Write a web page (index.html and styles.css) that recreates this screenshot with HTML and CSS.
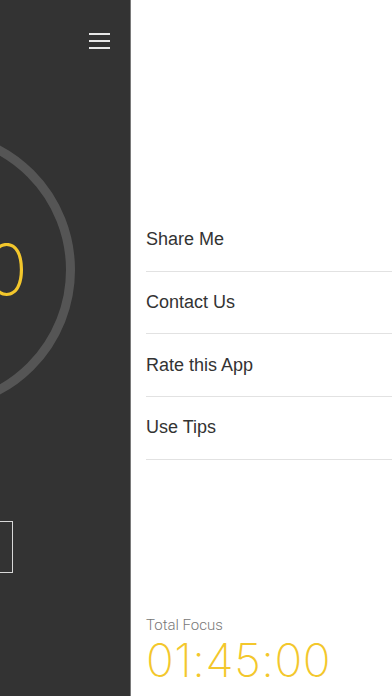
FILE: index.html
```html
<!DOCTYPE html>
<html lang="en">
<head>
    <meta charset="UTF-8">
    <meta name="viewport" content="width=device-width, initial-scale=1.0">
    <title>Focus Timer</title>
    <link rel="stylesheet" href="styles.css">
</head>
<body>
    <div class="app">
        <div class="timer-panel">
            <div class="timer-screen">
                <div class="topbar">
                    <button class="menu-btn" aria-label="Menu">
                        <span></span>
                        <span></span>
                        <span></span>
                    </button>
                </div>
                <div class="ring">
                    <div class="time">25:00</div>
                </div>
                <button class="start-btn" aria-label="Start"></button>
            </div>
        </div>

        <div class="side-menu">
            <ul class="menu-list">
                <li><a href="#">Share Me</a></li>
                <li><a href="#">Contact Us</a></li>
                <li><a href="#">Rate this App</a></li>
                <li><a href="#">Use Tips</a></li>
            </ul>

            <div class="total">
                <div class="total-label">Total Focus</div>
                <div class="total-time">01:45:00</div>
            </div>
        </div>
    </div>
</body>
</html>
```

FILE: styles.css
```css
*{
    padding: 0;
    margin: 0;
    box-sizing: border-box;
}

body{
    width: 392px;
    height: 696px;
    overflow: hidden;
    background: #fff;
    font-family: "Liberation Sans", Arial, sans-serif;
}

.app {
    display: flex;
    height: 100%;
}

/* dark timer screen, pushed off to the left */
.timer-panel {
    width: 131px;
    flex-shrink: 0;
    height: 100%;
    overflow: hidden;
    background: #333;
    border-right: 1px solid #7a7a7a;
}

.timer-screen {
    width: 392px;
    height: 100%;
    margin-left: -262px;
    display: flex;
    flex-direction: column;
    align-items: center;
}

.topbar {
    width: 100%;
    display: flex;
    justify-content: flex-end;
    padding: 33px 20px 0 0;
}

.menu-btn {
    width: 21px;
    display: flex;
    flex-direction: column;
    gap: 5.5px;
    background: none;
    border: none;
    outline: none;
}

.menu-btn span {
    display: block;
    height: 1.5px;
    background: #e8e8e8;
}

.ring {
    width: 282px;
    height: 282px;
    margin-top: 80px;
    border: 9px solid #555;
    border-radius: 50%;
    display: flex;
    justify-content: center;
    align-items: center;
}

.time {
    font-family: Inter, sans-serif;
    font-weight: 200;
    font-size: 70px;
    color: #f3c72c;
}

.start-btn {
    width: 158px;
    height: 52px;
    margin-top: 110px;
    background: none;
    border: 1px solid #d8d8d8;
    outline: none;
}

/* side menu */
.side-menu {
    flex: 1;
    height: 100%;
    display: flex;
    flex-direction: column;
    padding-left: 15px;
}

.menu-list {
    list-style: none;
    margin-top: 209px;
}

.menu-list li {
    height: 62.7px;
    display: flex;
    align-items: center;
    border-bottom: 1px solid #e2e2e2;
}

.menu-list a {
    color: #333;
    text-decoration: none;
    font-size: 18px;
}

.total {
    margin-top: auto;
    padding-bottom: 13px;
}

.total-label {
    font-family: Roboto, sans-serif;
    font-weight: 300;
    font-size: 15px;
    line-height: 18px;
    margin-bottom: 4px;
    color: #777;
}

.total-time {
    font-family: Inter, sans-serif;
    font-weight: 200;
    font-size: 46px;
    line-height: 45px;
    letter-spacing: 0.5px;
    color: #f3c72c;
}
```
